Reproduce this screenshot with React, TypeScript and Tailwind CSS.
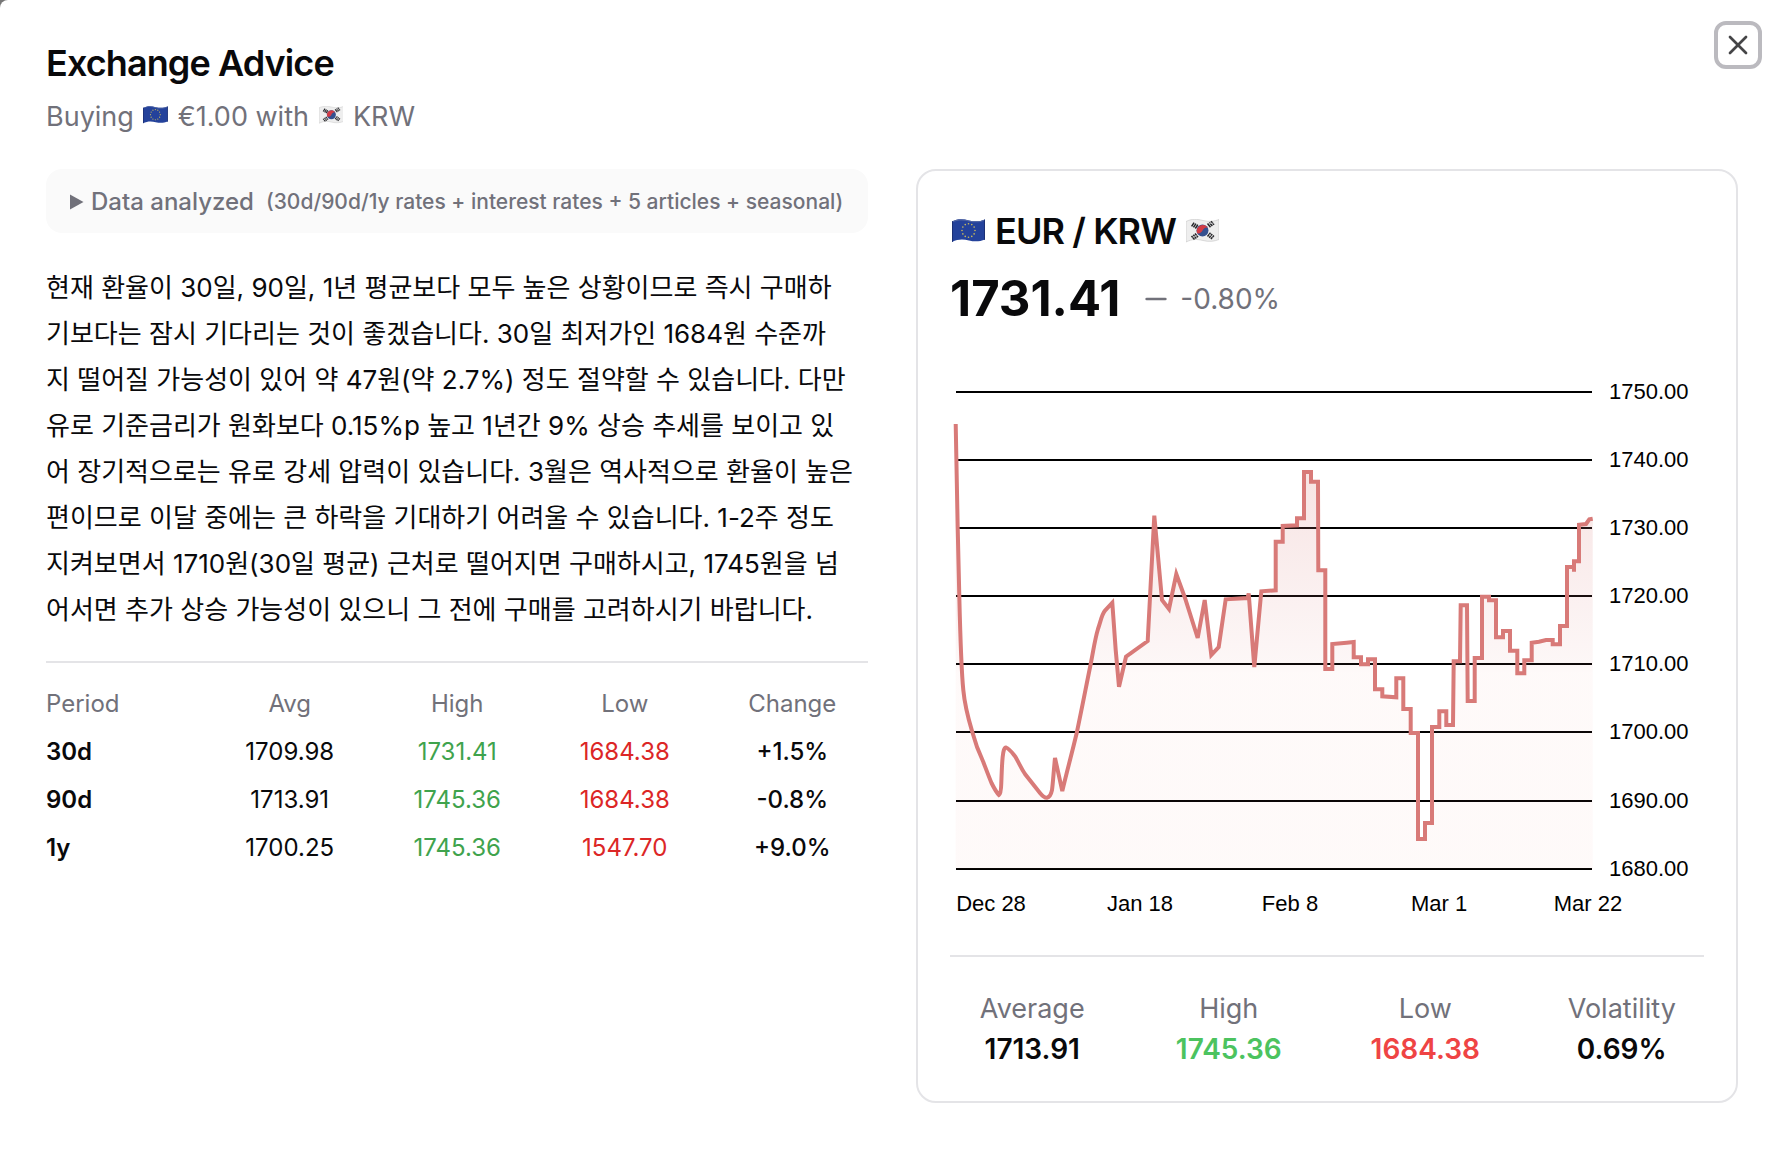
import React from 'react';
import { Minus, X } from 'lucide-react';

const periods = [
    { period: '30d', avg: '1709.98', high: '1731.41', low: '1684.38', change: '+1.5%' },
    { period: '90d', avg: '1713.91', high: '1745.36', low: '1684.38', change: '-0.8%' },
    { period: '1y', avg: '1700.25', high: '1745.36', low: '1547.70', change: '+9.0%' },
];

const stats = [
    { label: 'Average', value: '1713.91', color: 'text-[#09090b]' },
    { label: 'High', value: '1745.36', color: 'text-[#4cc35f]' },
    { label: 'Low', value: '1684.38', color: 'text-[#ef4444]' },
    { label: 'Volatility', value: '0.69%', color: 'text-[#09090b]' },
];

const gridLines = [
    { y: 29, label: '1750.00' },
    { y: 97, label: '1740.00' },
    { y: 165, label: '1730.00' },
    { y: 233, label: '1720.00' },
    { y: 301, label: '1710.00' },
    { y: 369, label: '1700.00' },
    { y: 438, label: '1690.00' },
    { y: 506, label: '1680.00' },
];

const dates = [
    { x: 41, label: 'Dec 28' },
    { x: 190, label: 'Jan 18' },
    { x: 340, label: 'Feb 8' },
    { x: 489, label: 'Mar 1' },
    { x: 638, label: 'Mar 22' },
];

const ratePath =
    'M5.7 61 L7.7 165 L9.3 233 C10 262 11 304 13.3 327 C15 345 19 358 22.3 369 ' +
    'C26 383 30 392 33.3 399 C36 406 39 414 41.5 420 C45 427 47 430 49 432 Q51 431 51.3 420 ' +
    'C52 400 52.5 384 56 384.5 C60 386 63 391 65.5 394 C69 400 71 405 75 411 L90 430 ' +
    'Q94 435 97 434.7 Q100.5 434 102 427 C103 420 103.5 410 105 395 L112.3 428 ' +
    'C117 408 122 390 126.7 370 C131 350 136 324 140.7 301 C144 284 145 276 148 266 ' +
    'C151 257 152 251 155 247.7 L162.3 239.7 L165.7 287 L169 323.7 L176 293.7 L197.7 278 ' +
    'L204.3 152.7 L212 237 L219 246 L226.3 211 L235 235 L247.7 275 L254.7 237 L261.3 292 ' +
    'L268.7 284 L275.7 236.3 L297.5 235 L298.7 230.5 L304.3 304 L311.3 228.3 L325.7 227.3 ' +
    'V178.7 H332.7 V163 L347 162.3 V155.3 H354 V109 H361 V118.7 H368 L368.3 207.3 H375.3 V306 ' +
    'H382.3 V281 L396.7 279.7 L403.7 279 V294.3 H411 V301.3 H418 V296.3 H425 V326.3 H432.3 ' +
    'V333.3 L446.3 334.3 V315.3 H453.3 V346 H460.7 V370 H468 V476 H475 V460 H482 V364 H489.3 ' +
    'V348.3 H496.3 V362 H503 L503.7 298.3 H510 L510.7 242.3 H517 L517.7 338 H524.7 V295 H532 ' +
    'V233.7 H539 V237.3 H546 V274.3 H553 V268 H560 V287.7 H567.3 V310.3 H574.3 V297.3 H581.7 ' +
    'V279.7 L589 278.7 L596 277 H602.7 V281.3 H610 V263 H617 V204 H624 V208.7 V198.3 H629 ' +
    'V161.7 L636 161 L639.3 156.3 L642.7 155.7';

const flagOutline = 'M0 2.5 C6 -0.5 11 0 17 1.5 C23 3 28 2.5 33 0.5 V20.5 C28 22.5 23 23 17 21.5 C11 20 6 20 0 23 Z';

const EuFlag = ({ className }: { className: string }) => (
    <svg viewBox="0 0 33 24" className={className} role="img" aria-label="European Union">
        <path d={flagOutline} fill="#24429b" />
        <path d="M0 2.5 C6 -0.5 11 0 17 1.5 C23 3 28 2.5 33 0.5 V1.5 C28 3.5 23 4 17 2.5 C11 1 6 1 0 3.5 Z" fill="#5266a3" />
        <path d="M32 1 L33 0.5 V20.5 L32 21 Z M0 2.5 L1 2 V22.5 L0 23 Z" fill="#1b2f74" />
        {Array.from({ length: 12 }, (_, i) => (
            <circle
                key={i}
                cx={16.5 + 6.5 * Math.sin((i * Math.PI) / 6)}
                cy={11.5 - 6.8 * Math.cos((i * Math.PI) / 6)}
                r="0.8"
                fill="#c9b95c"
            />
        ))}
    </svg>
);

const KrFlag = ({ className }: { className: string }) => (
    <svg viewBox="0 0 33 24" className={className} role="img" aria-label="South Korea">
        <path d={flagOutline} fill="#eeeeee" stroke="#c4c4c4" strokeWidth="0.6" />
        <circle cx="16.5" cy="11.6" r="6" fill="#34508f" />
        <path d="M11 13.9 A6 6 0 0 1 22 9.2 C20 7.2 17.6 9.3 16.5 11.6 C15.2 14 13 15.2 11 13.9 Z" fill="#d23b45" />
        <g stroke="#26262a" strokeWidth="1.5" fill="none">
            <path d="M5.5 7 L8.5 3.5 M7.2 8.3 L10.2 4.8 M8.9 9.6 L11.9 6.1" transform="rotate(-8 8.5 6.5)" />
            <path d="M22.5 3.2 L25.5 6.8 M24.3 2 L27.3 5.6 M26 0.8 L29 4.4" transform="translate(-1 1.4)" />
            <path d="M5.5 17 L8.5 20.6 M7.3 15.8 L10.3 19.4 M9 14.6 L12 18.2" />
            <path d="M21.5 17.4 L24.5 13.8 M23.2 18.7 L26.2 15.1 M24.9 20 L27.9 16.4" />
        </g>
        <g stroke="#eeeeee" strokeWidth="0.6">
            <path d="M23 4.6 L28 4 M6.5 18.4 L11.5 16.4 M23 15.5 L27 18.4" />
        </g>
    </svg>
);

const RateChart = () => (
    <svg viewBox="0 0 754 560" className="mt-8 block w-full font-['Liberation_Sans',Arial,sans-serif] text-[22px]" fill="#000">
        <defs>
            <linearGradient id="rateFill" x1="0" y1="61" x2="0" y2="506" gradientUnits="userSpaceOnUse">
                <stop offset="0" stopColor="#d87a78" stopOpacity="0.24" />
                <stop offset="0.54" stopColor="#d87a78" stopOpacity="0.06" />
                <stop offset="0.56" stopColor="#f08a80" stopOpacity="0.045" />
                <stop offset="1" stopColor="#f08a80" stopOpacity="0.045" />
            </linearGradient>
        </defs>
        {gridLines.map(({ y, label }) => (
            <g key={label}>
                <line x1="6" x2="642" y1={y} y2={y} stroke="#000" strokeWidth="2" />
                <text x="659" y={y + 7}>{label}</text>
            </g>
        ))}
        <path d={`${ratePath} V506 H5.7 Z`} fill="url(#rateFill)" />
        <path d={ratePath} fill="none" stroke="#d87a78" strokeWidth="4" />
        {dates.map(({ x, label }) => (
            <text key={label} x={x} y="548" textAnchor="middle">{label}</text>
        ))}
    </svg>
);

const PeriodTable = () => (
    <table className="w-full table-fixed text-2xl">
        <thead>
            <tr className="h-8 text-[#71717a]">
                <th className="w-[152px] p-0 text-left font-normal">Period</th>
                <th className="p-0 pl-4 font-normal">Avg</th>
                <th className="p-0 pl-4 font-normal">High</th>
                <th className="p-0 pl-4 font-normal">Low</th>
                <th className="p-0 pl-4 font-normal">Change</th>
            </tr>
        </thead>
        <tbody>
            {periods.map((row) => (
                <tr key={row.period} className="text-center">
                    <th className="p-0 pt-4 text-left font-semibold">{row.period}</th>
                    <td className="p-0 pt-4 pl-4">{row.avg}</td>
                    <td className="p-0 pt-4 pl-4 text-[#3fa34d]">{row.high}</td>
                    <td className="p-0 pt-4 pl-4 text-[#dc2626]">{row.low}</td>
                    <td className="p-0 pt-4 pl-4 font-medium">{row.change}</td>
                </tr>
            ))}
        </tbody>
    </table>
);

export default function App() {
    return (
        <div className="bg-[#777777]">
            <main className="relative min-h-screen rounded-tl-lg bg-white pt-[45px] pr-9 pb-12 pl-[46px] font-['Inter','Noto_Sans_CJK_KR',sans-serif] text-[#09090b]">
                <button
                    type="button"
                    aria-label="Close"
                    className="absolute top-[21px] right-3 flex size-12 items-center justify-center rounded-xl border-4 border-[#bbbabf] text-[#454547]"
                >
                    <X size={32} />
                </button>

                <header>
                    <h1 className="text-4xl leading-9 font-semibold tracking-tight">Exchange Advice</h1>
                    <p className="mt-4 text-[27px] leading-10 text-[#71717a]">
                        Buying <EuFlag className="mx-0.5 mb-0.5 inline h-[18px] align-baseline" /> €1.00 with{' '}
                        <KrFlag className="mx-0.5 mb-0.5 inline h-[18px] align-baseline" /> KRW
                    </p>
                </header>

                <div className="mt-8 grid grid-cols-2 items-start gap-12">
                    <section>
                        <details className="rounded-2xl bg-[#fafafa] px-6 pt-[17px] pb-[15px] text-[#71717a]">
                            <summary className="flex list-none items-center text-2xl font-medium">
                                <svg viewBox="0 0 14 16" className="mr-[7px] h-4 w-3.5" fill="currentColor" aria-hidden="true">
                                    <path d="M0 0.5 L13.5 8 L0 15.5 Z" />
                                </svg>
                                Data analyzed
                                <span className="ml-3 text-[21px] leading-8">(30d/90d/1y rates + interest rates + 5 articles + seasonal)</span>
                            </summary>
                        </details>

                        <p className="mt-8 text-[26px] leading-[46px] break-all">
                            현재 환율이 30일, 90일, 1년 평균보다 모두 높은 상황이므로 즉시 구매하<br />
                            기보다는 잠시 기다리는 것이 좋겠습니다. 30일 최저가인 1684원 수준까<br />
                            지 떨어질 가능성이 있어 약 47원(약 2.7%) 정도 절약할 수 있습니다. 다만<br />
                            유로 기준금리가 원화보다 0.15%p 높고 1년간 9% 상승 추세를 보이고 있<br />
                            어 장기적으로는 유로 강세 압력이 있습니다. 3월은 역사적으로 환율이 높은<br />
                            편이므로 이달 중에는 큰 하락을 기대하기 어려울 수 있습니다. 1-2주 정도<br />
                            지켜보면서 1710원(30일 평균) 근처로 떨어지면 구매하시고, 1745원을 넘<br />
                            어서면 추가 상승 가능성이 있으니 그 전에 구매를 고려하시기 바랍니다.
                        </p>

                        <div className="mt-7 border-t-2 border-[#e4e4e7] pt-[25px]">
                            <PeriodTable />
                        </div>
                    </section>

                    <section className="rounded-[20px] border-2 border-[#e4e4e7] p-8">
                        <h2 className="flex items-center gap-2.5 pl-0.5 text-4xl leading-[56px] font-semibold tracking-tight">
                            <EuFlag className="h-6" />
                            EUR / KRW
                            <KrFlag className="h-6" />
                        </h2>
                        <div className="mt-2 flex items-center gap-5">
                            <span className="text-[49px] leading-[64px] font-bold">1731.41</span>
                            <span className="flex items-center gap-2 text-[28px] leading-10 text-[#71717a]">
                                <Minus size={32} />
                                -0.80%
                            </span>
                        </div>

                        <RateChart />

                        <dl className="mt-8 grid grid-cols-4 gap-8 border-t-2 border-[#e4e4e7] pt-8 text-center leading-10">
                            {stats.map((stat) => (
                                <div key={stat.label}>
                                    <dt className="text-[27px] leading-10 text-[#71717a]">{stat.label}</dt>
                                    <dd className={`text-[28px] leading-10 font-semibold ${stat.color}`}>{stat.value}</dd>
                                </div>
                            ))}
                        </dl>
                    </section>
                </div>
            </main>
        </div>
    );
}
